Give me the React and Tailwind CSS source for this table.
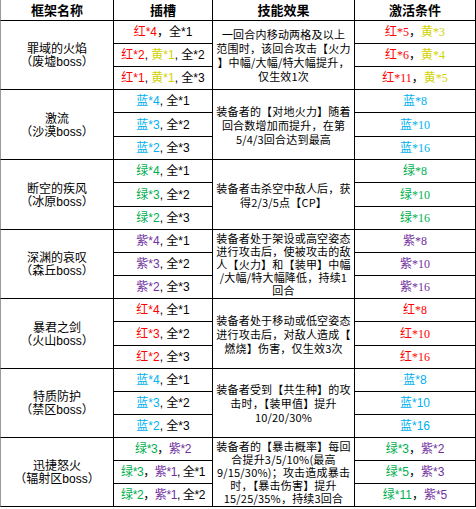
import React from 'react';

const COLOR = {
  r: 'text-[#ff0000]',
  y: 'text-[#d2d200]',
  b: 'text-[#00b0f0]',
  g: 'text-[#00b050]',
  p: 'text-[#7030a0]',
  k: 'text-black',
};

const SANS = "font-['Liberation_Sans','Noto_Sans_CJK_SC',sans-serif]";
const SERIF = "font-['Liberation_Serif','Noto_Sans_CJK_SC',serif]";

const groups = [
  {
    name: '罪域的火焰',
    area: '（废墟boss）',
    slots: [
      [['r', '红*4'], ['k', '，全*1']],
      [['r', '红*2'], ['k', ', '], ['y', '黄*1'], ['k', ', 全*2']],
      [['r', '红*1'], ['k', ', '], ['y', '黄*1'], ['k', ', 全*3']],
    ],
    skill: ['一回合内移动两格及以上', '范围时，该回合攻击【火力', '】中幅/大幅/特大幅提升，', '仅生效1次'],
    conds: [
      [['r', '红*5'], ['k', '，'], ['y', '黄*3']],
      [['r', '红*6'], ['k', '，'], ['y', '黄*4']],
      [['r', '红*11'], ['k', '，'], ['y', '黄*5']],
    ],
    serif: true,
  },
  {
    name: '激流',
    area: '（沙漠boss）',
    slots: [
      [['b', '蓝*4'], ['k', ', 全*1']],
      [['b', '蓝*3'], ['k', ', 全*2']],
      [['b', '蓝*2'], ['k', ', 全*3']],
    ],
    skill: ['装备者的【对地火力】随着', '回合数增加而提升，在第', '5/4/3回合达到最高'],
    conds: [[['b', '蓝*8']], [['b', '蓝*10']], [['b', '蓝*16']]],
    serif: true,
  },
  {
    name: '断空的疾风',
    area: '（冰原boss）',
    slots: [
      [['g', '绿*4'], ['k', ', 全*1']],
      [['g', '绿*3'], ['k', ', 全*2']],
      [['g', '绿*2'], ['k', ', 全*3']],
    ],
    skill: ['装备者击杀空中敌人后，获', '得2/3/5点【CP】'],
    conds: [[['g', '绿*8']], [['g', '绿*10']], [['g', '绿*16']]],
    serif: true,
  },
  {
    name: '深渊的哀叹',
    area: '（森丘boss）',
    slots: [
      [['p', '紫*4'], ['k', ', 全*1']],
      [['p', '紫*3'], ['k', ', 全*2']],
      [['p', '紫*2'], ['k', ', 全*3']],
    ],
    skill: ['装备者处于架设或高空姿态', '进行攻击后，使被攻击的敌', '人【火力】和【装甲】中幅', '/大幅/特大幅降低，持续1', '回合'],
    conds: [[['p', '紫*8']], [['p', '紫*10']], [['p', '紫*16']]],
    serif: true,
  },
  {
    name: '暴君之剑',
    area: '（火山boss）',
    slots: [
      [['r', '红*4'], ['k', ', 全*1']],
      [['r', '红*3'], ['k', ', 全*2']],
      [['r', '红*2'], ['k', ', 全*3']],
    ],
    skill: ['装备者处于移动或低空姿态', '进行攻击后，对敌人造成【', '燃烧】伤害，仅生效3次'],
    conds: [[['r', '红*8']], [['r', '红*10']], [['r', '红*16']]],
    serif: true,
  },
  {
    name: '特质防护',
    area: '（禁区boss）',
    slots: [
      [['b', '蓝*4'], ['k', ', 全*1']],
      [['b', '蓝*3'], ['k', ', 全*2']],
      [['b', '蓝*2'], ['k', ', 全*3']],
    ],
    skill: ['装备者受到【共生种】的攻', '击时，【装甲值】提升', '10/20/30%'],
    conds: [[['b', '蓝*8']], [['b', '蓝*10']], [['b', '蓝*16']]],
    serif: false,
  },
  {
    name: '迅捷怒火',
    area: '（辐射区boss）',
    slots: [
      [['g', '绿*3'], ['k', '，'], ['p', '紫*2']],
      [['g', '绿*3'], ['k', '，'], ['p', '紫*1'], ['k', ', 全*1']],
      [['g', '绿*2'], ['k', '，'], ['p', '紫*1'], ['k', ', 全*2']],
    ],
    skill: ['装备者的【暴击概率】每回', '合提升3/5/10%(最高', '9/15/30%)；攻击造成暴击', '时，【暴击伤害】提升', '15/25/35%，持续3回合'],
    conds: [
      [['g', '绿*3'], ['k', '，'], ['p', '紫*2']],
      [['g', '绿*5'], ['k', '，'], ['p', '紫*3']],
      [['g', '绿*11'], ['k', '，'], ['p', '紫*5']],
    ],
    serif: false,
    tight: true,
  },
];

function Segs({ parts }) {
  return (
    <span className="whitespace-pre">
      {parts.map(([c, t], i) => (
        <span key={i} className={COLOR[c]}>
          {t}
        </span>
      ))}
    </span>
  );
}

const cell = 'flex items-center justify-center border-r border-b border-black overflow-hidden';

export default function App() {
  return (
    <div className="w-[476px] bg-white text-black">
      <div className="grid grid-cols-[114px_99px_142px_121px] grid-rows-[21px_23px_23px_23px_23px_24px_23px_23px_24px_23px_23px_23px_23px_23px_24px_23px_23px_23px_23px_23px_23px_23px] font-['Noto_Sans_CJK_SC',sans-serif]">
        {/* header */}
        <div className={`${cell} border-l border-l-[#9a9a9a] text-[13px] font-bold`}>框架名称</div>
        <div className={`${cell} text-[13px] font-bold`}>插槽</div>
        <div className={`${cell} text-[13px] font-bold`}>技能效果</div>
        <div className={`${cell} text-[13px] font-bold`}>激活条件</div>

        {groups.map((g, gi) => {
          const slotCls = `${cell} col-start-2 text-[12px] ${SANS} ${g.tight ? 'tracking-[-0.4px]' : ''}`;
          const condCls = `${cell} col-start-4 text-[12px] ${g.serif ? SERIF : SANS}`;
          const lead = g.skill.length > 4 ? 'leading-[13px]' : 'leading-[14px]';
          return (
            <React.Fragment key={gi}>
              <div className={`${cell} row-span-3 col-start-1 flex-col border-l border-l-[#9a9a9a] text-[12px] leading-[15px]`}>
                <span>{g.name}</span>
                <span className={SANS}>{g.area}</span>
              </div>
              <div className={slotCls}>
                <Segs parts={g.slots[0]} />
              </div>
              <div className={`${cell} row-span-3 col-start-3 flex-col px-[2px] text-[11px] ${lead} tracking-[0.2px] whitespace-nowrap`}>
                {g.skill.map((l, i) => (
                  <span key={i}>{l}</span>
                ))}
              </div>
              <div className={condCls}>
                <Segs parts={g.conds[0]} />
              </div>
              <div className={slotCls}>
                <Segs parts={g.slots[1]} />
              </div>
              <div className={condCls}>
                <Segs parts={g.conds[1]} />
              </div>
              <div className={slotCls}>
                <Segs parts={g.slots[2]} />
              </div>
              <div className={condCls}>
                <Segs parts={g.conds[2]} />
              </div>
            </React.Fragment>
          );
        })}
      </div>
    </div>
  );
}
